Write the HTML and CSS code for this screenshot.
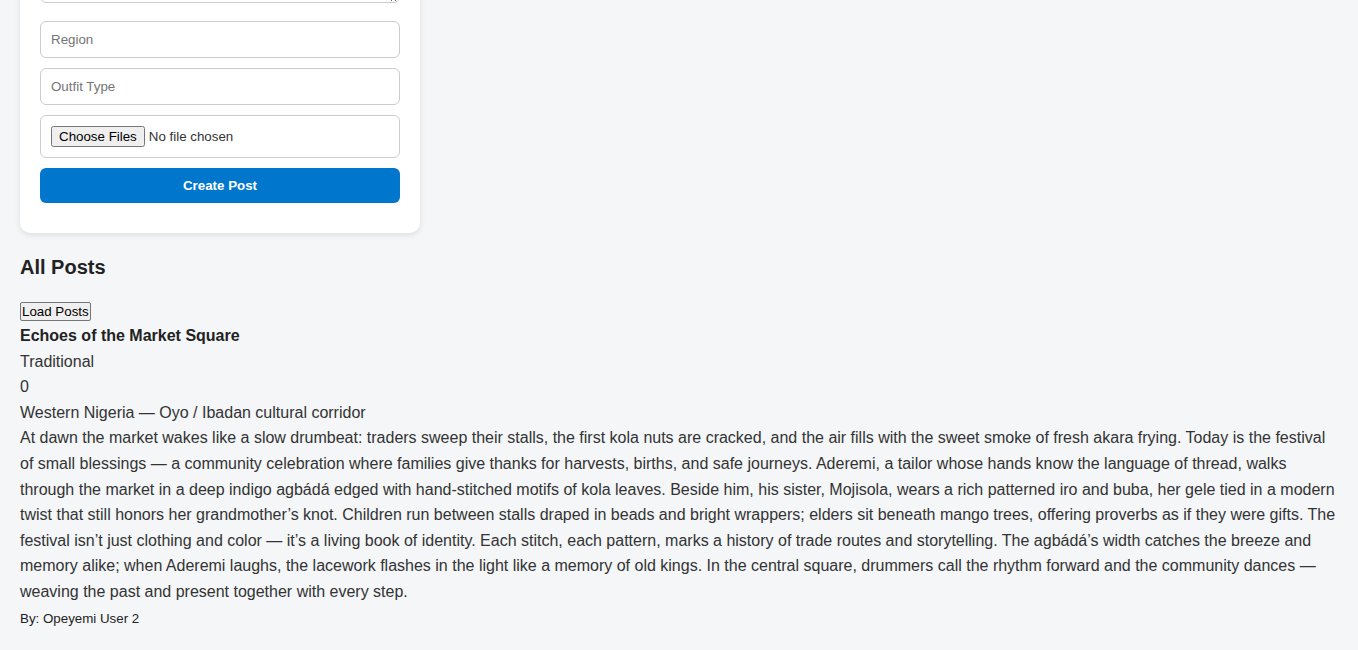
FILE: index.html
```html
<!DOCTYPE html>
<html lang="en">
<head>
<meta charset="utf-8">
<title>Posts</title>
<link rel="stylesheet" href="styles.css">
</head>
<body>
<div class="card">
  <h2 class="card-title">Create a Post</h2>
  <form class="post-form">
    <input class="field" type="text" placeholder="Title">
    <textarea class="field area" placeholder="Write your story..."></textarea>
    <input class="field" type="text" placeholder="Region">
    <input class="field" type="text" placeholder="Outfit Type">
    <input class="field" type="file" multiple>
    <button class="submit" type="button">Create Post</button>
  </form>
</div>

<h2 class="section-title">All Posts</h2>
<button class="load" type="button">Load Posts</button>
<div class="post">
  <div class="post-title">Echoes of the Market Square</div>
  <div class="post-line">Traditional</div>
  <div class="post-line">0</div>
  <div class="post-line">Western Nigeria — Oyo / Ibadan cultural corridor</div>
  <div class="post-line">At dawn the market wakes like a slow drumbeat: traders sweep their stalls, the first kola nuts are cracked, and the air fills with the sweet smoke of fresh akara frying. Today is the festival of small blessings — a community celebration where families give thanks for harvests, births, and safe journeys. Aderemi, a tailor whose hands know the language of thread, walks through the market in a deep indigo agbádá edged with hand-stitched motifs of kola leaves. Beside him, his sister, Mojisola, wears a rich patterned iro and buba, her gele tied in a modern twist that still honors her grandmother’s knot. Children run between stalls draped in beads and bright wrappers; elders sit beneath mango trees, offering proverbs as if they were gifts. The festival isn’t just clothing and color — it’s a living book of identity. Each stitch, each pattern, marks a history of trade routes and storytelling. The agbádá’s width catches the breeze and memory alike; when Aderemi laughs, the lacework flashes in the light like a memory of old kings. In the central square, drummers call the rhythm forward and the community dances — weaving the past and present together with every step.</div>
  <div class="post-by">By: Opeyemi User 2</div>
</div>
<script src="script.js"></script>
</body>
</html>
```
FILE: styles.css
```css
html, body {
  margin: 0;
}
body {
  padding: 20px 20px 21px;
  background: #f4f6f8;
  font-family: "Liberation Sans", Arial, sans-serif;
  color: #333;
  line-height: 1.6;
}
.card {
  width: 400px;
  box-sizing: border-box;
  background: #fff;
  border-radius: 10px;
  padding: 20px;
  box-shadow: 0 2px 6px rgba(0, 0, 0, 0.1);
}
.card-title {
  margin: 0 0 16px;
  font-size: 20px;
}
.post-form {
  display: flex;
  flex-direction: column;
}
.field {
  display: block;
  width: 100%;
  box-sizing: border-box;
  padding: 10px;
  margin: 0 0 10px;
  border: 1px solid #ccc;
  border-radius: 6px;
  font-family: "Liberation Sans", Arial, sans-serif;
  font-size: 13.33px;
  line-height: normal;
  background: #fff;
  color: #333;
}
.area {
  height: 90px;
  margin-bottom: 18px;
}
.submit {
  display: block;
  width: 100%;
  margin: 0 0 10px;
  padding: 10px;
  border: none;
  border-radius: 6px;
  background: #0077cc;
  color: #fff;
  font-family: "Liberation Sans", Arial, sans-serif;
  font-size: 13.33px;
  font-weight: bold;
  line-height: normal;
}
.section-title {
  font-size: 20px;
  margin: 18px 0 19px;
  color: #222;
}
.load {
  display: block;
  margin: 0 0 2px;
  font-family: "Liberation Sans", Arial, sans-serif;
  font-size: 13.33px;
  line-height: normal;
  padding: 1px 1px;
  border: 1px solid #767676;
  border-radius: 2px;
  background: #efefef;
  color: #000;
}
.post {
  font-size: 16px;
}
.post-title {
  font-weight: bold;
  color: #222;
}
.post-by {
  font-size: 13.33px;
  margin-top: 3px;
  color: #222;
}
```
FILE: script.js
```js
window.scrollTo(0, document.documentElement.scrollHeight);
```
